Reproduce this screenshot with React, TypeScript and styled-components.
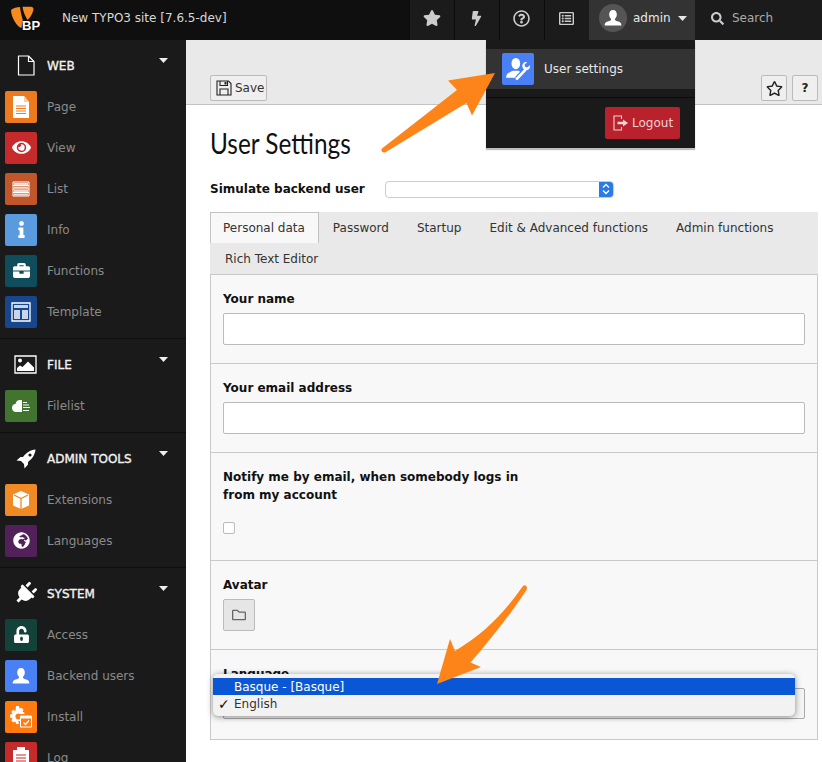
import React from "react";
import styled, { createGlobalStyle } from "styled-components";
import {
  FaStar,
  FaBolt,
  FaRegQuestionCircle,
  FaRegListAlt,
  FaSearch,
  FaEye,
  FaInfo,
  FaBriefcase,
  FaPlug,
  FaGlobeAfrica,
  FaUnlockAlt,
  FaRegStar,
  FaRegFolder,
} from "react-icons/fa";

const GlobalStyle = createGlobalStyle`
  html, body {
    margin: 0;
    padding: 0;
    background: #fff;
  }
  * {
    box-sizing: border-box;
  }
`;

const bust = "M12 2.5c-3 0-4.6 2.3-4.6 5.2 0 2.3 1 4 2.2 5.2v1.6c-.4 1-4.9 1.7-6.6 3.2-.8.7-1 2-1 3.3h20c0-1.3-.2-2.6-1-3.3-1.7-1.5-6.2-2.2-6.6-3.2v-1.6c1.2-1.2 2.2-2.9 2.2-5.2 0-2.9-1.6-5.2-4.6-5.2z";

const FileOutline = () => (
  <svg width="18" height="21" viewBox="0 0 18 21" fill="none" stroke="#fff" strokeWidth="1.200">
    <path d="M1.500 1h10L17 6.500V20H1.500z" strokeLinejoin="round" />
    <path d="M11.500 1v5.500H17" />
  </svg>
);

const ImageOutline = () => (
  <svg width="23" height="19" viewBox="0 0 23 19">
    <path d="M1 1h21v17H1z" fill="none" stroke="#fff" strokeWidth="1.300" />
    <circle cx="6" cy="5.500" r="2" fill="#fff" />
    <path d="M3 16v-3l3-2.500 2.500 1.500L14 6.500l6 6V16z" fill="#fff" />
  </svg>
);

const RocketIcon = () => (
  <svg width="20" height="20" viewBox="0 0 20 20">
    <path d="M19.500.5C14 1 10 4 7 8H4.500L.5 11.500 5 12l3 3 .5 4.500 3.500-4V13c4-3 7-7 7.500-12.500z" fill="#fff" />
    <circle cx="14" cy="6" r="1.600" fill="#1a1a1a" />
  </svg>
);

const PlugIcon = () => (
  <PlugTilt>
    <FaPlug size={23} />
  </PlugTilt>
);

const PageIcon = () => (
  <svg width="20" height="24" viewBox="0 0 20 24">
    <path d="M2 1h11l5 6v16H2z" fill="#fff" />
    <path d="M13 1v6h5z" fill="#f6cfa8" />
    <path d="M5 11h10M5 13.500h10M5 16h10M5 18.500h10" stroke="#ef7a22" strokeWidth="1.200" />
  </svg>
);

const ListIcon = () => (
  <svg width="18" height="16" viewBox="0 0 18 16" fill="none" stroke="#fff" strokeWidth="1">
    <path d="M1 1h16v14H1zM1 4.500h16M1 8h16M1 11.500h16" />
    <path d="M2 2h14v2H2zM2 5.500h14v2H2zM2 9h14v2H2zM2 12.500h14v2H2z" fill="#f4d9cb" stroke="none" />
  </svg>
);

const TemplateIcon = () => (
  <svg width="20" height="20" viewBox="0 0 20 20" fill="none" stroke="#fff" strokeWidth="1.300">
    <path d="M1 1h18v18H1z" />
    <path d="M3 3h14v3H3zM3 8h6v9H3zM11 8h6v9h-6z" fill="#c9d6e8" stroke="none" />
  </svg>
);

const CloudIcon = () => (
  <svg width="20" height="14" viewBox="0 0 20 14" fill="#fff">
    <path d="M9 1C6.500 1 5 2.500 4.500 5 2 5 1 7 1 9c0 2.500 2 4 4 4h6V1.500C10.500 1 10 1 9 1z" />
    <path d="M12 3.500h4M12 6h6M12 8.500h7M12 11.500h6" stroke="#fff" strokeWidth="1" fill="none" />
  </svg>
);

const BoxIcon = () => (
  <svg width="18" height="20" viewBox="0 0 18 20" fill="#fff">
    <path d="M9 1l8 3.500v11L9 19l-8-3.500v-11z" />
    <path d="M2 5l7 3.500L16 5M9 8.500V19" stroke="#f08a24" strokeWidth="1.300" fill="none" />
  </svg>
);

const GearIcon = () => (
  <svg width="24" height="24" viewBox="0 0 24 24">
    <path
      d="M7 1h3l.5 2.500 2-.8 2 2-1 2 2 1V9H11a3 3 0 1 0 0 5v2l-1.500-.2L9.800 19H7l-.5-2.600-2.200 1-2-2 1.200-2.200L1 12.500v-3l2.500-.5-1.200-2.200 2-2 2.200 1.200z"
      fill="#fff"
    />
    <path d="M11.500 11h11v11h-11z" fill="#ff7b0f" stroke="#fff" strokeWidth="1" />
    <path d="M11.500 11h11v2.500h-11z" fill="#fff" />
    <path d="M14.500 17.500l2 2 3.500-4" stroke="#fff" strokeWidth="1.300" fill="none" />
  </svg>
);

const LogIcon = () => (
  <svg width="16" height="22" viewBox="0 0 16 22" fill="#fff">
    <path d="M0 3h16v19H0z" />
    <path d="M4 0h8v4H4z" />
    <path d="M3 8h10M3 11h10M3 14h10M3 17h10" stroke="#c62a2a" strokeWidth="1.200" />
  </svg>
);

const BustIcon = ({ size }: { size: number }) => (
  <svg width={size} height={size} viewBox="0 0 24 24" fill="#fff">
    <path d={bust} />
  </svg>
);

const UserToolIcon = () => (
  <svg width="26" height="26" viewBox="0 0 24 24" fill="#fff">
    <ellipse cx="10" cy="7" rx="4" ry="5.200" />
    <path d="M1 20c0-4 3-5 6.500-6.500h5c1.500 1 2.500 1.500 3.500 2L12 20z" />
    <path d="M11 21l8-8.500" stroke="#4a80f5" strokeWidth="4.500" fill="none" />
    <path d="M11 21l8-8.500" stroke="#fff" strokeWidth="2.400" fill="none" strokeLinecap="round" />
    <path d="M23 8.500l-2.500 2-2-.5-.5-2L20.500 5.500c-2.500-.5-5 1.500-4.500 4.500.3 2 2.500 3.500 4.500 3 2-.5 3-2.500 2.500-4.500z" />
  </svg>
);

const SaveIcon = () => (
  <svg width="16" height="16" viewBox="0 0 16 16" fill="none" stroke="#222" strokeWidth="1.100">
    <path d="M1 1h11.500L15 3.500V15H1z" />
    <path d="M4 1v4.500h7.500V1M4 15V9h8v6" />
    <path d="M8.500 2h2v2.500h-2z" fill="#222" stroke="none" />
  </svg>
);

const CaretDown = () => (
  <svg width="9" height="5" viewBox="0 0 9 5" fill="currentColor">
    <path d="M0 0h9L4.500 5z" />
  </svg>
);

const LogoutIcon = () => (
  <svg width="16" height="16" viewBox="0 0 16 16" fill="none" stroke="#f2d3d5" strokeWidth="1.100">
    <path d="M8.500 4V1H1v14h7.500v-3" />
    <path d="M4.500 6.800h5.500V4.500L15 8l-5 3.500V9.200H4.500z" fill="#f2d3d5" stroke="none" />
  </svg>
);

const Logo = () => (
  <svg width="28" height="32" viewBox="10 3 28 32" fill="#f68b1f">
    <path d="M11 10c2-2 6-3 9-3 .5 5 2 10 3 14l-1.500 7C17 27 11 17 11 10z" />
    <path d="M22.500 6.800H31c1.500.2 2.500 1.200 2.500 2.200-.5 4-3.500 9-6 11-2.500-4-4.500-9-5-13.200z" />
  </svg>
);

type ModuleItem = { label: string; color: string; icon: React.ReactNode };
type ModuleGroup = { title: string; icon: React.ReactNode; items: ModuleItem[] };

const groups: ModuleGroup[] = [
  {
    title: "WEB",
    icon: <FileOutline />,
    items: [
      { label: "Page", color: "#ee7a1f", icon: <PageIcon /> },
      { label: "View", color: "#c62a2a", icon: <FaEye size={19} /> },
      { label: "List", color: "#c0562a", icon: <ListIcon /> },
      { label: "Info", color: "#5a9ade", icon: <FaInfo size={17} /> },
      { label: "Functions", color: "#0f4c5c", icon: <FaBriefcase size={17} /> },
      { label: "Template", color: "#17468c", icon: <TemplateIcon /> },
    ],
  },
  {
    title: "FILE",
    icon: <ImageOutline />,
    items: [{ label: "Filelist", color: "#41752f", icon: <CloudIcon /> }],
  },
  {
    title: "ADMIN TOOLS",
    icon: <RocketIcon />,
    items: [
      { label: "Extensions", color: "#f08a24", icon: <BoxIcon /> },
      { label: "Languages", color: "#52215a", icon: <FaGlobeAfrica size={17} /> },
    ],
  },
  {
    title: "SYSTEM",
    icon: <PlugIcon />,
    items: [
      { label: "Access", color: "#12423a", icon: <FaUnlockAlt size={17} /> },
      { label: "Backend users", color: "#4a80f5", icon: <BustIcon size={20} /> },
      { label: "Install", color: "#ff7b0f", icon: <GearIcon /> },
      { label: "Log", color: "#c62a2a", icon: <LogIcon /> },
    ],
  },
];

const tabs = ["Personal data", "Password", "Startup", "Edit & Advanced functions", "Admin functions"];

function App(): JSX.Element {
  return (
    <Page>
      <GlobalStyle />
      <TopBar>
        <Brand>
          <Logo />
          <BrandMark>BP</BrandMark>
        </Brand>
        <SiteName>New TYPO3 site [7.6.5-dev]</SiteName>
        <Toolbar>
          <ToolItem><FaStar size={18} /></ToolItem>
          <ToolItem><FaBolt size={15} /></ToolItem>
          <ToolItem><FaRegQuestionCircle size={17} /></ToolItem>
          <ToolItem><FaRegListAlt size={15} /></ToolItem>
          <UserItem>
            <Avatar><BustIcon size={20} /></Avatar>
            <UserName>admin</UserName>
            <CaretDown />
          </UserItem>
          <SearchItem>
            <FaSearch size={13} />
            <SearchText>Search</SearchText>
          </SearchItem>
        </Toolbar>
        <UserMenu>
          <MenuRow>
            <ModuleSquare $color="#4a80f5"><UserToolIcon /></ModuleSquare>
            <MenuLabel>User settings</MenuLabel>
          </MenuRow>
          <MenuFoot>
            <LogoutButton>
              <LogoutIcon />
              Logout
            </LogoutButton>
          </MenuFoot>
        </UserMenu>
      </TopBar>
      <Body>
        <Sidebar>
          {groups.map((group) => (
            <Group key={group.title}>
              <GroupHeader>
                <GroupIcon>{group.icon}</GroupIcon>
                <GroupTitle>{group.title}</GroupTitle>
                <GroupCaret><CaretDown /></GroupCaret>
              </GroupHeader>
              {group.items.map((item) => (
                <ModuleRow key={item.label}>
                  <ModuleSquare $color={item.color}>{item.icon}</ModuleSquare>
                  <ModuleLabel>{item.label}</ModuleLabel>
                </ModuleRow>
              ))}
            </Group>
          ))}
        </Sidebar>
        <Main>
          <DocHeader>
            <SaveButton>
              <SaveIcon />
              Save
            </SaveButton>
            <DocActions>
              <SquareButton><FaRegStar size={17} /></SquareButton>
              <SquareButton><strong>?</strong></SquareButton>
            </DocActions>
          </DocHeader>
          <Content>
            <Title><TitleText>User Settings</TitleText></Title>
            <SimulateRow>
              <SimulateLabel>Simulate backend user</SimulateLabel>
              <MacSelect>
                <MacCap>
                  <svg width="8" height="12" viewBox="0 0 8 12" fill="none" stroke="#fff" strokeWidth="1.300">
                    <path d="M1 4.500L4 1.500l3 3M1 7.500l3 3 3-3" />
                  </svg>
                </MacCap>
              </MacSelect>
            </SimulateRow>
            <TabBar>
              {tabs.map((tab, i) => (
                <Tab key={tab} $active={i === 0}>{tab}</Tab>
              ))}
              <SecondRowTab $active={false}>Rich Text Editor</SecondRowTab>
            </TabBar>
            <Panel>
              <Field $height={89}>
                <FieldLabel>Your name</FieldLabel>
                <TextInput />
              </Field>
              <Field $height={89}>
                <FieldLabel>Your email address</FieldLabel>
                <TextInput />
              </Field>
              <Field $height={108}>
                <FieldLabel>
                  Notify me by email, when somebody logs in
                  <br />
                  from my account
                </FieldLabel>
                <CheckBox />
              </Field>
              <Field $height={89}>
                <FieldLabel>Avatar</FieldLabel>
                <FolderButton><FaRegFolder size={14} /></FolderButton>
              </Field>
              <LanguageField>
                <FieldLabel>Language</FieldLabel>
                <LanguageSelect />
                <OptionList>
                  <OptionRow $selected>Basque - [Basque]</OptionRow>
                  <OptionRow $selected={false}>
                    <CheckMark>✓</CheckMark>
                    English
                  </OptionRow>
                </OptionList>
              </LanguageField>
            </Panel>
          </Content>
        </Main>
      </Body>
      <ArrowLayer width="822" height="762" viewBox="0 0 822 762">
        <path d="M382 148.500L457 90 448 80.500 495 73 472 115.500 466.500 103 385 152.500C382 153 380.500 150 382 148.500z" fill="#fd8418" />
        <path d="M523 586C505 612 484 634 455 651L450 639 437 684 481 667 470.500 662.500C492 638 512 612 526.500 590 528 586 525 584 523 586z" fill="#fd8418" />
      </ArrowLayer>
    </Page>
  );
}

const Page = styled.div`
  position: relative;
  width: 822px;
  height: 762px;
  overflow: hidden;
  font-family: "DejaVu Sans", Verdana, sans-serif;
  font-size: 12px;
  color: #111;
`;

const TopBar = styled.header`
  position: relative;
  display: flex;
  align-items: center;
  height: 40px;
  background: #0f0f0f;
  color: #ddd;
`;

const Brand = styled.div`
  position: relative;
  width: 62px;
  height: 40px;
  padding: 3px 0 0 10px;
`;

const BrandMark = styled.span`
  position: absolute;
  left: 22px;
  top: 18px;
  font-family: "Liberation Sans", Arial, sans-serif;
  color: #fff;
  font-size: 13px;
  font-weight: bold;
  letter-spacing: 0.2px;
  text-shadow: 0 0 2px #000;
`;

const SiteName = styled.div`
  padding-bottom: 4px;
  font-size: 12px;
  color: #d8d8d8;
`;

const Toolbar = styled.nav`
  display: flex;
  margin-left: auto;
  height: 40px;
  width: 413px;
`;

const ToolItem = styled.div`
  display: flex;
  align-items: center;
  justify-content: center;
  width: 45px;
  padding: 0 1px 4px 0;
  background: #1b1b1b;
  border-left: 1px solid #0c0c0c;
  color: #ccc;
`;

const UserItem = styled.div`
  display: flex;
  align-items: center;
  gap: 6px;
  width: 106px;
  padding: 0 0 4px 10px;
  background: #333;
  color: #e8e8e8;
`;

const Avatar = styled.span`
  display: flex;
  align-items: center;
  justify-content: center;
  width: 28px;
  height: 28px;
  border-radius: 50%;
  background: #555;
`;

const UserName = styled.span`
  font-size: 12px;
  margin-right: 1px;
`;

const SearchItem = styled.div`
  display: flex;
  align-items: center;
  gap: 8px;
  flex: 1;
  padding: 0 0 4px 16px;
  background: #1b1b1b;
  color: #ccc;
`;

const SearchText = styled.span`
  font-size: 12px;
  color: #aaa;
`;

const UserMenu = styled.div`
  position: absolute;
  z-index: 5;
  left: 486px;
  top: 40px;
  width: 209px;
  height: 108px;
  padding-top: 9px;
  background: #1a1a1a;
  box-shadow: 0 2px 1px rgba(0, 0, 0, 0.25);
`;

const MenuRow = styled.div`
  display: flex;
  align-items: center;
  gap: 10px;
  height: 40px;
  padding-left: 16px;
  background: #333;
`;

const MenuLabel = styled.span`
  color: #e8e8e8;
  font-size: 12px;
`;

const MenuFoot = styled.div`
  display: flex;
  justify-content: flex-end;
  margin-top: 8px;
  padding: 9px 15px 0 0;
  border-top: 1px solid #0c0c0c;
`;

const LogoutButton = styled.div`
  display: flex;
  align-items: center;
  gap: 3px;
  width: 75px;
  height: 32px;
  padding-left: 8px;
  border-radius: 2px;
  background: #b9212c;
  color: #f2d3d5;
  font-size: 12px;
`;

const Body = styled.div`
  display: flex;
  height: 722px;
`;

const Sidebar = styled.aside`
  flex: 0 0 186px;
  height: 722px;
  overflow: hidden;
  background: #1a1a1a;
`;

const Group = styled.section`
  padding: 5px 0 6px;
  border-bottom: 1px solid #0e0e0e;
`;

const GroupHeader = styled.div`
  display: flex;
  align-items: center;
  height: 41px;
  color: #fff;
`;

const GroupIcon = styled.span`
  display: flex;
  justify-content: center;
  width: 47px;
  padding-left: 4px;
  color: #fff;
`;

const PlugTilt = styled.span`
  display: flex;
  transform: rotate(45deg);
`;

const GroupTitle = styled.span`
  flex: 1;
  font-size: 12px;
  color: #f2f2f2;
  -webkit-text-stroke: 0.35px #f2f2f2;
`;

const GroupCaret = styled.span`
  display: flex;
  margin: -10px 18px 0 0;
  color: #eee;
`;

const ModuleRow = styled.div`
  display: flex;
  align-items: center;
  gap: 10px;
  height: 41px;
  padding-left: 5px;
`;

const ModuleSquare = styled.span<{ $color: string }>`
  display: flex;
  align-items: center;
  justify-content: center;
  flex: 0 0 32px;
  width: 32px;
  height: 32px;
  border-radius: 2px;
  background: ${(p) => p.$color};
  color: #fff;
`;

const ModuleLabel = styled.span`
  font-size: 12px;
  color: #8a8a8a;
`;

const Main = styled.main`
  flex: 1;
  min-width: 0;
  background: #fff;
`;

const DocHeader = styled.div`
  display: flex;
  align-items: flex-end;
  justify-content: space-between;
  height: 65px;
  padding: 0 4px 3px 24px;
  background: #e9e9e9;
  border-bottom: 1px solid #c3c3c3;
`;

const SaveButton = styled.div`
  display: flex;
  align-items: center;
  gap: 3px;
  width: 57px;
  height: 26px;
  padding-left: 5px;
  background: #efefef;
  border: 1px solid #bbb;
  border-radius: 2px;
  font-size: 12px;
  color: #333;
`;

const DocActions = styled.div`
  display: flex;
  gap: 5px;
`;

const SquareButton = styled.div`
  display: flex;
  align-items: center;
  justify-content: center;
  width: 26px;
  height: 26px;
  background: #efefef;
  border: 1px solid #bbb;
  border-radius: 2px;
  color: #222;
`;

const Content = styled.div`
  padding: 0 4px 0 24px;
`;

const Title = styled.h1`
  margin: 0;
  padding-top: 21px;
  height: 76px;
  font-family: "Lato", sans-serif;
  font-size: 29px;
  font-weight: 400;
  line-height: 34px;
  color: #111;
`;

const TitleText = styled.span`
  display: inline-block;
  transform: scaleX(0.84);
  transform-origin: left center;
`;

const SimulateRow = styled.div`
  display: flex;
  align-items: center;
  height: 16px;
  margin-bottom: 15px;
`;

const SimulateLabel = styled.span`
  flex: 0 0 175px;
  font-weight: bold;
  font-size: 12px;
`;

const MacSelect = styled.div`
  display: flex;
  justify-content: flex-end;
  width: 229px;
  height: 17px;
  background: #fff;
  border: 1px solid #ccc;
  border-radius: 4px;
  overflow: hidden;
`;

const MacCap = styled.span`
  display: flex;
  align-items: center;
  justify-content: center;
  width: 14px;
  background: #2a7ae8;
`;

const TabBar = styled.div`
  display: flex;
  flex-wrap: wrap;
  background: #e9e9e9;
`;

const Tab = styled.div<{ $active: boolean }>`
  height: 31px;
  padding: ${(p) => (p.$active ? "0 13px 0 12px" : "0 13px")};
  line-height: 30px;
  font-size: 12px;
  color: #333;
  background: ${(p) => (p.$active ? "#f8f8f8" : "transparent")};
  border: 1px solid ${(p) => (p.$active ? "#c3c3c3" : "transparent")};
  border-bottom: 0;
`;

const SecondRowTab = styled(Tab)`
  margin-left: 1px;
`;

const Panel = styled.div`
  background: #f8f8f8;
  border: 1px solid #c9c9c9;
`;

const Field = styled.div<{ $height: number }>`
  height: ${(p) => p.$height}px;
  padding: 15px 12px 0;
  border-bottom: 1px solid #c9c9c9;
`;

const LanguageField = styled.div`
  position: relative;
  height: 89px;
  padding: 15px 12px 0;
`;

const FieldLabel = styled.div`
  margin-bottom: 5px;
  font-size: 12px;
  font-weight: bold;
  line-height: 18px;
  color: #111;
`;

const TextInput = styled.div`
  width: 582px;
  height: 32px;
  background: #fff;
  border: 1px solid #bbb;
  border-radius: 2px;
`;

const CheckBox = styled.div`
  width: 12px;
  height: 12px;
  margin-top: 18px;
  background: #fff;
  border: 1px solid #bbb;
  border-radius: 2px;
`;

const FolderButton = styled.div`
  display: flex;
  align-items: center;
  justify-content: center;
  width: 32px;
  height: 32px;
  background: #e6e6e6;
  border: 1px solid #bbb;
  border-radius: 2px;
  color: #666;
`;

const LanguageSelect = styled.div`
  width: 582px;
  height: 31px;
  background: #f4f4f4;
  border: 1px solid #aaa;
  border-radius: 2px;
`;

const OptionList = styled.div`
  position: absolute;
  left: 2px;
  top: 24px;
  width: 582px;
  height: 42px;
  padding-top: 4px;
  background: #f2f2f2;
  border-radius: 5px;
  box-shadow: 0 1px 6px rgba(0, 0, 0, 0.45);
`;

const OptionRow = styled.div<{ $selected: boolean }>`
  position: relative;
  height: 17px;
  padding-left: 21px;
  line-height: 19px;
  font-size: 12px;
  color: ${(p) => (p.$selected ? "#fff" : "#333")};
  background: ${(p) => (p.$selected ? "#0a57d6" : "transparent")};
`;

const CheckMark = styled.span`
  position: absolute;
  left: 5px;
  font-size: 14px;
  font-weight: bold;
  color: #111;
`;

const ArrowLayer = styled.svg`
  position: absolute;
  z-index: 10;
  left: 0;
  top: 0;
  pointer-events: none;
`;

export default App;
